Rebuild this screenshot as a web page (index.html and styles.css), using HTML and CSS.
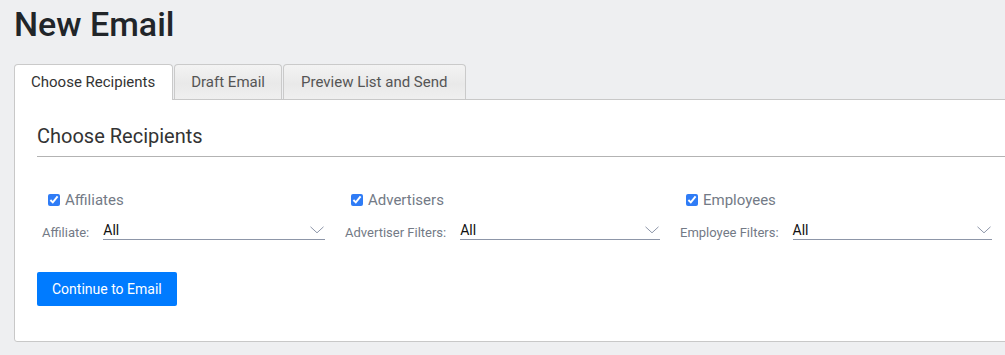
FILE: index.html
```html
<!DOCTYPE html>
<html lang="en">
<head>
    <meta charset="UTF-8">
    <title>New Email</title>
    <link rel="stylesheet" href="styles.css">
</head>
<body>
    <h1 class="page-title">New Email</h1>

    <div class="tabs">
        <div class="tab active">Choose Recipients</div>
        <div class="tab">Draft Email</div>
        <div class="tab tab-wide">Preview List and Send</div>
    </div>

    <div class="panel">
        <h2 class="panel-title">Choose Recipients</h2>

        <div class="recipients">
            <div class="recipient">
                <label class="check"><input type="checkbox" checked> Affiliates</label>
                <div class="filter">
                    <span class="filter-label">Affiliate:</span>
                    <div class="select">
                        <span>All</span>
                        <svg width="14" height="8" viewBox="0 0 14 8"><path d="M0.5 0.8 L7 6.8 L13.5 0.8" fill="none" stroke="#8d96a8" stroke-width="1"/></svg>
                    </div>
                </div>
            </div>
            <div class="recipient">
                <label class="check"><input type="checkbox" checked> Advertisers</label>
                <div class="filter">
                    <span class="filter-label">Advertiser Filters:</span>
                    <div class="select">
                        <span>All</span>
                        <svg width="14" height="8" viewBox="0 0 14 8"><path d="M0.5 0.8 L7 6.8 L13.5 0.8" fill="none" stroke="#8d96a8" stroke-width="1"/></svg>
                    </div>
                </div>
            </div>
            <div class="recipient">
                <label class="check"><input type="checkbox" checked> Employees</label>
                <div class="filter">
                    <span class="filter-label">Employee Filters:</span>
                    <div class="select">
                        <span>All</span>
                        <svg width="14" height="8" viewBox="0 0 14 8"><path d="M0.5 0.8 L7 6.8 L13.5 0.8" fill="none" stroke="#8d96a8" stroke-width="1"/></svg>
                    </div>
                </div>
            </div>
        </div>

        <button class="btn-primary">Continue to Email</button>
    </div>
</body>
</html>
```

FILE: styles.css
```css
body {
    font-family: Roboto, "Liberation Sans", sans-serif;
    margin: 0;
    padding: 0 0 0 14px;
    background-color: #eeeff1;
    color: #333;
    overflow: hidden;
}

.page-title {
    margin: 5px 0 20px 0;
    font-size: 34px;
    line-height: 39px;
    font-weight: 500;
    color: #212529;
}

.tabs {
    display: flex;
    margin-bottom: -1px;
    position: relative;
}

.tab {
    height: 34px;
    line-height: 35px;
    padding: 0 16px;
    font-size: 15px;
    color: #555;
    border: 1px solid #cacaca;
    border-bottom: none;
    border-radius: 4px 4px 0 0;
    margin-right: 1px;
    background: linear-gradient(#f3f3f3 0%, #e9e9e9 55%, #efefef 100%);
}

.tab.active {
    color: #333;
    background: #fff;
    height: 35px;
    padding: 0 17px 0 16px;
}

.tab-wide {
    padding: 0 18px 0 17px;
}

.panel {
    width: 1100px;
    background: #fff;
    border: 1px solid #c8c8c8;
    border-radius: 0 0 0 3px;
    padding: 24px 22px 35px 22px;
    box-sizing: border-box;
}

.panel-title {
    margin: 0;
    font-size: 20px;
    line-height: 24px;
    font-weight: 400;
    color: #333;
    padding-bottom: 8px;
    border-bottom: 1px solid #b3b3b3;
}

.recipients {
    display: grid;
    grid-template-columns: 283px 315px 312px;
    column-gap: 20px;
    margin: 33px 0 0 5px;
}

.check {
    display: flex;
    align-items: center;
    font-size: 15px;
    color: #737a86;
    height: 20px;
}

.check input {
    width: 12px;
    height: 12px;
    margin: 0 5px 0 6px;
    accent-color: #2f7cf6;
}

.filter {
    display: flex;
    align-items: flex-end;
    margin-top: 11px;
}

.filter-label {
    font-size: 13px;
    color: #737a86;
    margin-right: 14px;
    line-height: 14px;
}

.select {
    flex: 1;
    display: flex;
    justify-content: space-between;
    align-items: center;
    font-size: 14px;
    color: #111;
    height: 18px;
    border-bottom: 1px solid #8d96a8;
}

.select svg {
    margin-right: 1px;
}

.btn-primary {
    display: block;
    margin-top: 32px;
    background: #007bff;
    color: #fff;
    border: none;
    border-radius: 2px;
    font-family: Roboto, "Liberation Sans", sans-serif;
    font-size: 14px;
    height: 34px;
    padding: 0 15px;
}
```
